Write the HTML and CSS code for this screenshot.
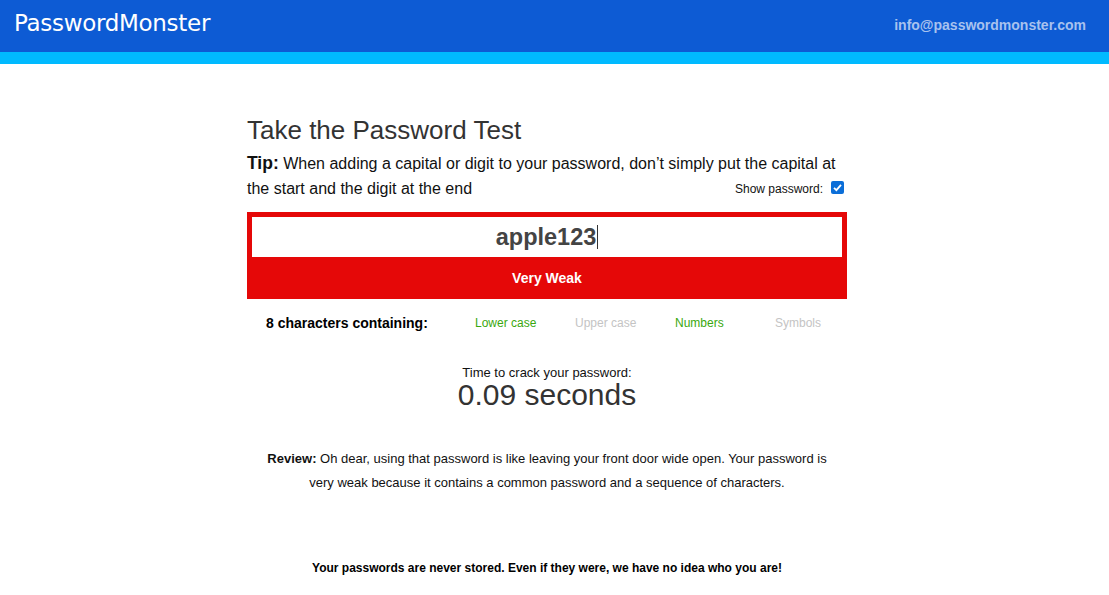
FILE: index.html
```html
<!DOCTYPE html>
<html>
<head>
<meta charset="utf-8">
<link rel="stylesheet" href="styles.css">
</head>
<body>
<header class="topbar">
  <div class="logo">PasswordMonster</div>
  <div class="email">info@passwordmonster.com</div>
</header>
<div class="strip"></div>
<div class="page">
<main class="main">
  <h1 class="title">Take the Password Test</h1>
  <p class="tip"><b>Tip:</b> When adding a capital or digit to your password, don’t simply put the capital at the start and the digit at the end<span class="show"><span class="show-label">Show password:</span><span class="check"><svg width="13" height="13" viewBox="0 0 13 13"><rect x="0" y="0" width="13" height="13" rx="2" fill="#0b6ed8"/><path d="M3 6.8 L5.4 9.2 L10 3.8" fill="none" stroke="#fff" stroke-width="1.8"/></svg></span></span></p>
  <div class="meter">
    <div class="field"><span class="pw">apple123</span><span class="caret"></span></div>
    <div class="strength">Very Weak</div>
  </div>
  <div class="criteria">
    <div class="count">8 characters containing:</div>
    <div class="crit on">Lower case</div>
    <div class="crit">Upper case</div>
    <div class="crit on">Numbers</div>
    <div class="crit">Symbols</div>
  </div>
  <div class="crack">
    <div class="crack-label">Time to crack your password:</div>
    <div class="crack-time">0.09 seconds</div>
  </div>
  <p class="review"><b>Review:</b> Oh dear, using that password is like leaving your front door wide open. Your password is very weak because it contains a common password and a sequence of characters.</p>
  <p class="footer">Your passwords are never stored. Even if they were, we have no idea who you are!</p>
</main>
</div>
</body>
</html>
```
FILE: styles.css
```css
* { box-sizing: border-box; }
html, body { margin: 0; padding: 0; background: #fff; }
body { font-family: "Liberation Sans", Arial, sans-serif; color: #000; }

.topbar {
  height: 52px;
  background: #0d5bd4;
  display: flex;
  align-items: center;
  justify-content: space-between;
  padding: 0 23px 0 14px;
}
.logo {
  color: #fff;
  font-family: "DejaVu Sans", sans-serif;
  font-size: 23px;
  letter-spacing: -0.3px;
  margin-top: -6px;
}
.email {
  color: #a8c2ee;
  font-weight: bold;
  font-size: 14px;
  margin-top: -3px;
}
.strip { height: 12px; background: #00baff; }

.page { padding-right: 15px; }
.main {
  width: 600px;
  margin: 0 auto;
  padding-top: 51px;
}
.title {
  margin: 0;
  font-weight: normal;
  font-size: 26px;
  color: #333;
  line-height: 30px;
}
.tip {
  margin: 6px 0 0;
  font-size: 16px;
  line-height: 25px;
  color: #111;
}
.tip b { font-size: 17.5px; }
.show {
  float: right;
  display: inline-flex;
  align-items: center;
  gap: 8px;
  margin-top: 1px;
  margin-right: 3px;
}
.show-label { font-size: 12px; color: #111; }
.check { display: inline-flex; margin-top: -5px; }

.meter {
  margin-top: 11px;
  background: #e50808;
  padding: 5px 5px 0;
}
.field {
  background: #fff;
  height: 40px;
  display: flex;
  align-items: center;
  justify-content: center;
}
.pw {
  font-weight: bold;
  font-size: 23.5px;
  color: #444;
}
.caret {
  width: 1px;
  height: 24px;
  background: #333;
  margin-left: 1px;
}
.strength {
  height: 42px;
  display: flex;
  align-items: center;
  justify-content: center;
  color: #fff;
  font-weight: bold;
  font-size: 14px;
}

.criteria {
  display: grid;
  grid-template-columns: 228px 100px 100px 100px 100px;
  align-items: center;
  margin-top: 16px;
  height: 16px;
}
.count {
  font-weight: bold;
  font-size: 14px;
  padding-left: 19px;
}
.crit { font-size: 12px; color: #c4c4c4; }
.crit.on { color: #3aa80e; }

.crack {
  text-align: center;
  margin-top: 34px;
}
.crack-label { font-size: 13px; color: #111; line-height: 15px; }
.crack-time { font-size: 30px; color: #333; line-height: 30px; }

.review {
  margin: 37px 0 0;
  text-align: center;
  font-size: 13px;
  line-height: 23.5px;
  color: #111;
  padding: 0 18px;
}
.footer {
  margin: 67px 0 0;
  text-align: center;
  font-size: 12px;
  font-weight: bold;
  color: #000;
}
```
